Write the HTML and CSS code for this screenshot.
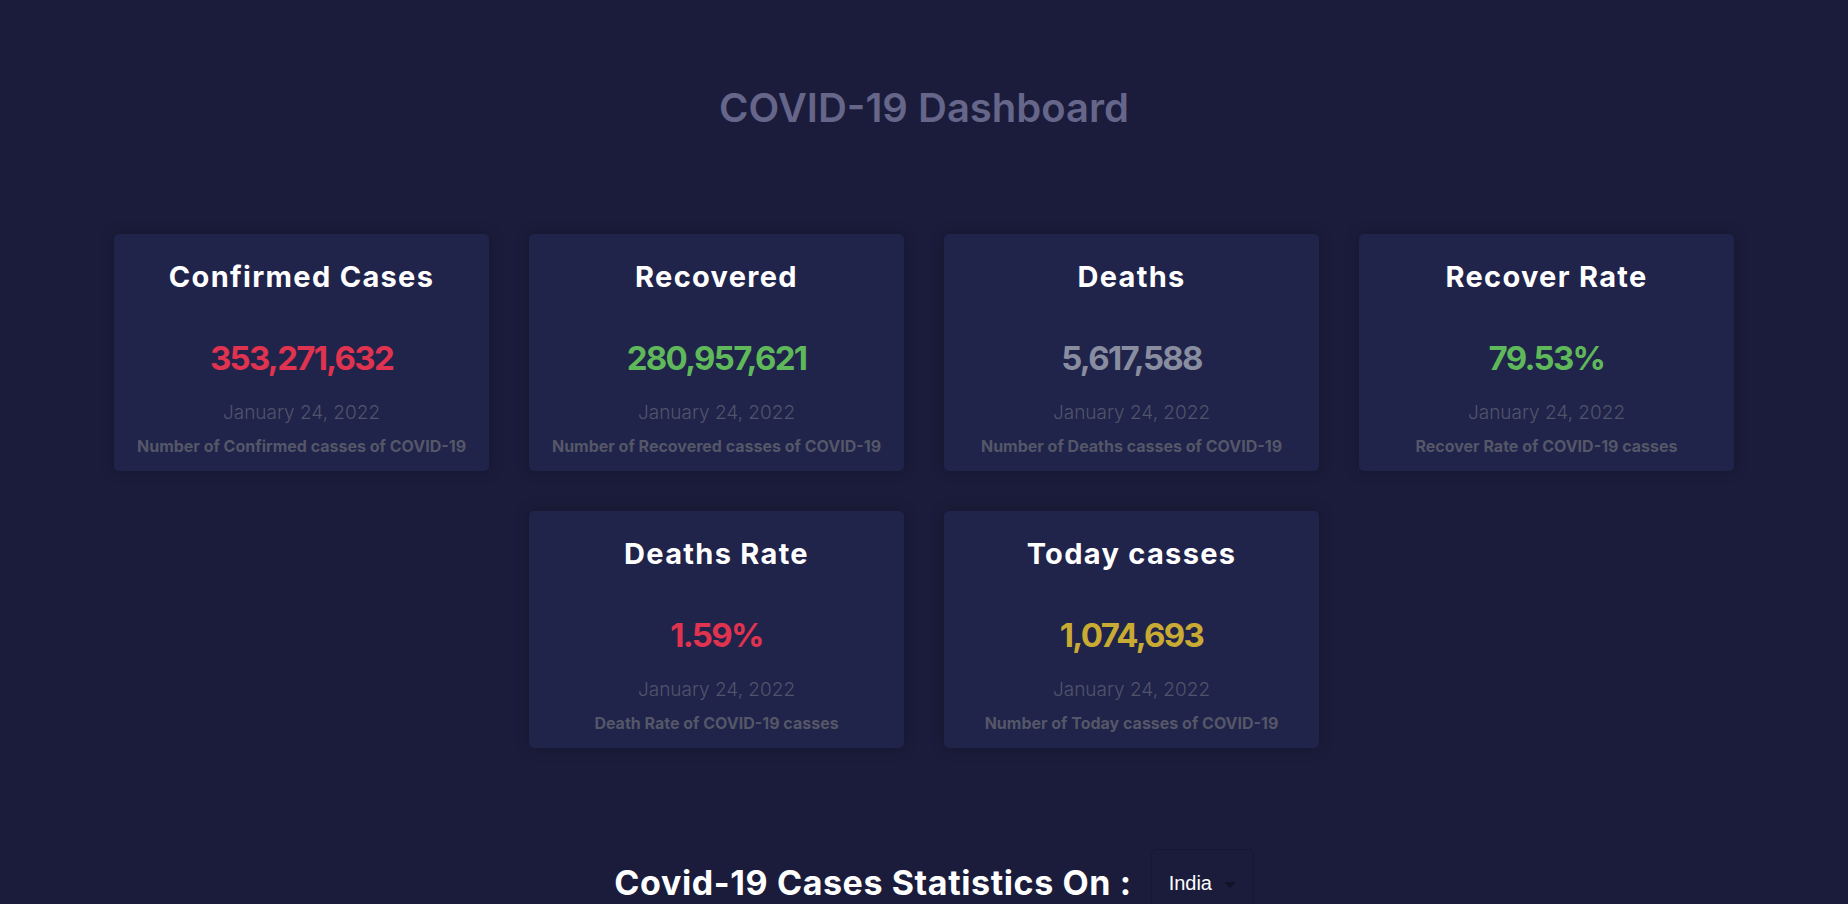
FILE: index.html
```html
<!DOCTYPE html>
<html lang="en">
<head>
<meta charset="utf-8">
<title>COVID-19 Dashboard</title>
<link rel="stylesheet" href="styles.css">
</head>
<body>
  <h1 class="page-title">COVID-19 Dashboard</h1>
  <section class="cards">
    <div class="card">
      <h2 class="card-title">Confirmed Cases</h2>
      <p class="card-value red">353,271,632</p>
      <p class="card-date">January 24, 2022</p>
      <p class="card-desc">Number of Confirmed casses of COVID-19</p>
    </div>
    <div class="card">
      <h2 class="card-title">Recovered</h2>
      <p class="card-value green">280,957,621</p>
      <p class="card-date">January 24, 2022</p>
      <p class="card-desc">Number of Recovered casses of COVID-19</p>
    </div>
    <div class="card">
      <h2 class="card-title">Deaths</h2>
      <p class="card-value gray">5,617,588</p>
      <p class="card-date">January 24, 2022</p>
      <p class="card-desc">Number of Deaths casses of COVID-19</p>
    </div>
    <div class="card">
      <h2 class="card-title">Recover Rate</h2>
      <p class="card-value green">79.53%</p>
      <p class="card-date">January 24, 2022</p>
      <p class="card-desc">Recover Rate of COVID-19 casses</p>
    </div>
    <div class="card">
      <h2 class="card-title">Deaths Rate</h2>
      <p class="card-value red">1.59%</p>
      <p class="card-date">January 24, 2022</p>
      <p class="card-desc">Death Rate of COVID-19 casses</p>
    </div>
    <div class="card">
      <h2 class="card-title">Today casses</h2>
      <p class="card-value yellow">1,074,693</p>
      <p class="card-date">January 24, 2022</p>
      <p class="card-desc">Number of Today casses of COVID-19</p>
    </div>
  </section>
  <section class="stats">
    <h2 class="stats-title">Covid-19 Cases Statistics On :</h2>
    <div class="select-wrap">
      <select class="country-select">
        <option>India</option>
      </select>
    </div>
  </section>
</body>
</html>
```
FILE: styles.css
```css
* { box-sizing: border-box; }
html, body { margin: 0; padding: 0; }
body {
  background: #1b1c3b;
  font-family: Inter, "Noto Sans", sans-serif;
  color: #fff;
}
.page-title {
  margin: 82px 0 0;
  text-align: center;
  font-size: 40px;
  line-height: 51px;
  font-weight: 600;
  color: #65668a;
}
.cards {
  display: flex;
  flex-wrap: wrap;
  justify-content: center;
  gap: 40px;
  max-width: 1620px;
  margin: 101px auto 0;
}
.card {
  width: 375px;
  height: 237px;
  background: #20234a;
  border-radius: 5px;
  box-shadow: 0 0 14px rgba(0, 0, 0, 0.25);
  padding: 25px 6px 0;
  text-align: center;
}
.card p { margin: 0; }
.card-title {
  margin: 0;
  font-size: 29px;
  line-height: 36px;
  font-weight: 700;
  color: #fff;
  letter-spacing: 1.3px;
}
.card-value {
  margin-top: 43px !important;
  font-size: 33px;
  line-height: 40px;
  font-weight: 700;
  letter-spacing: -1.7px;
}
.red { color: #e0334f; }
.green { color: #5fb85a; }
.gray { color: #898da0; }
.yellow { color: #c9ab33; }
.card-date {
  margin-top: 23px !important;
  font-size: 19px;
  line-height: 24px;
  font-weight: 300;
  color: #50546a;
}
.card-desc {
  margin-top: 11px !important;
  font-size: 16px;
  line-height: 20px;
  font-weight: 700;
  color: #545768;
}
.stats {
  display: flex;
  justify-content: center;
  align-items: center;
  gap: 19px;
  margin-top: 101px;
  padding-left: 20px;
}
.stats-title {
  margin: 0;
  font-size: 34px;
  line-height: 40px;
  font-weight: 700;
  letter-spacing: 0.6px;
  color: #fff;
}
.select-wrap {
  position: relative;
}
.select-wrap::after {
  content: "";
  position: absolute;
  right: 18px;
  top: 33px;
  border-left: 6px solid transparent;
  border-right: 6px solid transparent;
  border-top: 6px solid #111226;
  pointer-events: none;
}
.country-select {
  appearance: none;
  -webkit-appearance: none;
  width: 103px;
  height: 68px;
  padding: 0 0 0 17px;
  background: #1b1c3b;
  border: 1px solid #161731;
  border-radius: 5px;
  color: #fff;
  font-family: "Liberation Sans", Arial, sans-serif;
  font-size: 20px;
}
```
